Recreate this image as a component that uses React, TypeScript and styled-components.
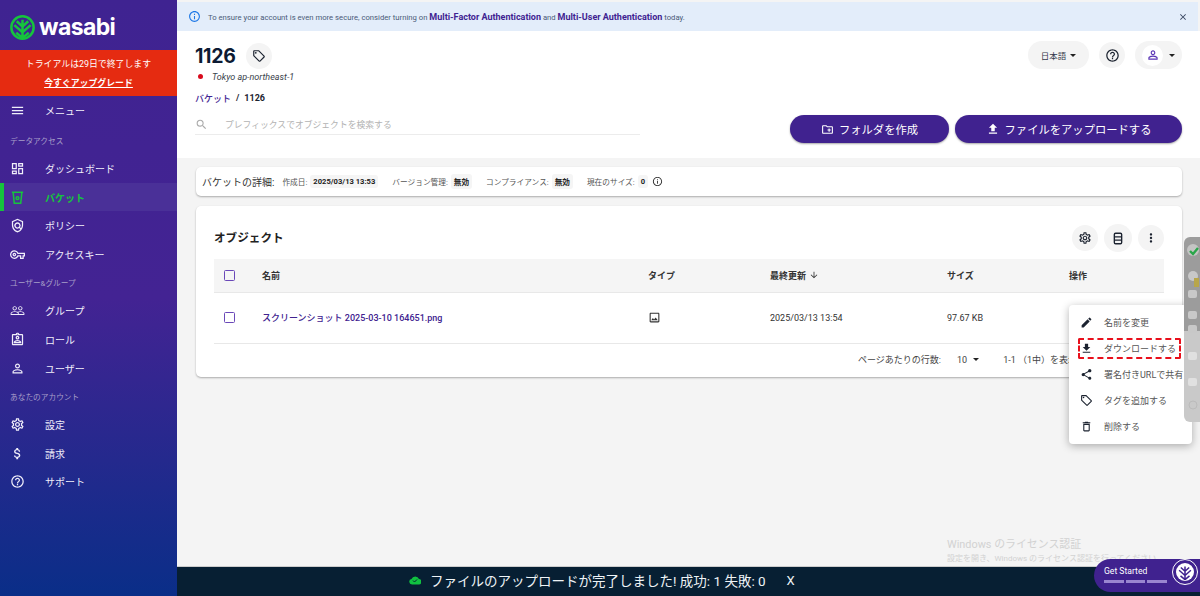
import React from "react";
import styled, { createGlobalStyle } from "styled-components";
import {
  MdMenu, MdOutlineDashboard, MdOutlineVpnKey, MdPeopleOutline, MdOutlineAssignmentInd, MdPersonOutline,
  MdOutlineSettings, MdAttachMoney, MdHelpOutline, MdSearch, MdInfoOutline, MdClose, MdOutlineLocalOffer,
  MdOutlineCreateNewFolder, MdFileUpload, MdMoreVert, MdArrowDownward, MdOutlineImage, MdEdit, MdFileDownload,
  MdShare, MdOutlineDelete, MdOutlinePolicy,
} from "react-icons/md";

const Global = createGlobalStyle`
  html, body { margin: 0; padding: 0; width: 1200px; height: 596px; overflow: hidden; background: #f4f4f4; }
  body { font-family: "Roboto", "Noto Sans CJK JP", sans-serif; color: #1c2330; }
  * { box-sizing: border-box; }
`;

const Page = styled.div`display: flex; width: 1200px; height: 596px; overflow: hidden; position: relative;`;
const Sidebar = styled.aside`
  width: 177px; flex: none; height: 596px; display: flex; flex-direction: column;
  background: linear-gradient(180deg, #3f2391 0%, #432393 50%, #0a2e88 100%);
  color: #fff;
`;
const Logo = styled.div`height: 50px; display: flex; align-items: center; gap: 4px; padding: 4px 0 0 10px; flex: none;`;
const LogoText = styled.span`font: 700 23px "Inter", "Liberation Sans", sans-serif; letter-spacing: -0.6px; color: #fff;`;
const Trial = styled.div`
  height: 46px; background: #e52b11; display: flex; flex-direction: column; align-items: center; flex: none;
  padding-top: 7px; gap: 5px; font-size: 8.9px; line-height: 14px;
`;
const Upgrade = styled.span`font-weight: 700; text-decoration: underline;`;
const Nav = styled.div`display: flex; flex-direction: column;`;
const NavItem = styled.div<{ $active?: boolean }>`
  height: 28.6px; flex: none; display: flex; align-items: center; padding-left: ${(p) => (p.$active ? "6px" : "10px")};
  gap: 20px; font-size: 10px; color: ${(p) => (p.$active ? "#16c43d" : "#f0eefa")};
  font-weight: ${(p) => (p.$active ? 700 : 400)};
  background: ${(p) => (p.$active ? "#4a3098" : "transparent")};
  border-left: ${(p) => (p.$active ? "4px solid #16c43d" : "none")};
  svg { width: 15px; height: 15px; flex: none; }
`;
const NavGroup = styled.div<{ $lead?: boolean }>`
  height: 28px; flex: none; display: flex; align-items: center; padding-left: 10px; font-size: 7.7px; color: #a79fc9;
  margin-top: ${(p) => (p.$lead ? "1.7px" : "0")};
`;

const Main = styled.main`flex: 1; min-width: 0; display: flex; flex-direction: column; position: relative;`;
const Notice = styled.div`
  height: 29px; flex: none; margin-top: 2px; margin-right: 2px; background: #e3edfa; display: flex; align-items: center;
  padding: 0 10px 0 11px; gap: 7px; font-size: 7.7px; color: #4a5a78;
`;
const NoticeText = styled.div`flex: 1;`;
const NoticeLink = styled.b`color: #3f2391; font-weight: 700; font-size: 9px;`;
const Head = styled.header`
  height: 127px; flex: none; background: #fff; padding: 11px 18px 0 18px; display: grid;
  grid-template-columns: 1fr auto;
`;
const HeadLeft = styled.div`display: flex; flex-direction: column; width: 445px;`;
const TitleRow = styled.div`display: flex; align-items: center; gap: 10px; height: 28px;`;
const Title = styled.h1`margin: 0; font: 700 19.5px "Inter", sans-serif; color: #0c1a33; letter-spacing: -0.3px;`;
const RoundBtn = styled.div<{ $size?: number }>`
  width: ${(p) => p.$size ?? 26}px; height: ${(p) => p.$size ?? 26}px; border-radius: 50%; background: #f4f4f4;
  display: flex; align-items: center; justify-content: center; flex: none; color: #1c2330;
`;
const Region = styled.div`display: flex; align-items: center; gap: 6px; height: 13px; font-size: 9px; font-style: italic; color: #3a3f4b;`;
const FlagDot = styled.span`width: 11px; height: 8px; background: #fff; display: flex; align-items: center; justify-content: center; &::after { content: ""; width: 5px; height: 5px; border-radius: 50%; background: #d80b1d; }`;
const Crumbs = styled.div`display: flex; align-items: center; gap: 5px; margin-top: 8px; font-size: 9px; font-weight: 700; color: #1c2330; height: 14px;`;
const CrumbLink = styled.span`color: #3f2391; font-weight: 500; font-size: 9px;`;
const SearchBox = styled.div`display: flex; align-items: center; gap: 17px; height: 22px; margin-top: 8px; padding-top: 1px; border-bottom: 1px solid #ececec; font-size: 8.8px; color: #b3b3b3;`;
const HeadRight = styled.div`display: flex; flex-direction: column; align-items: flex-end; margin-top: -1px;`;
const TopTools = styled.div`display: flex; align-items: center; gap: 10px;`;
const LangBtn = styled.div`width: 61px; height: 28px; border-radius: 14px; background: #f4f4f4; display: flex; align-items: center; justify-content: center; gap: 4px; font-size: 8.5px; color: #33394a;`;
const Caret = styled.span`width: 0; height: 0; border: 3px solid transparent; border-top: 3.5px solid #222; border-bottom: 0; display: inline-block;`;
const UserBtn = styled.div`width: 47px; height: 28px; border-radius: 14px; background: #f4f4f4; display: flex; align-items: center; gap: 6px; padding-left: 7px;`;
const UserCircle = styled.div`width: 21px; height: 21px; border-radius: 50%; background: #fff; display: flex; align-items: center; justify-content: center; color: #5a35b5;`;
const Actions = styled.div`display: flex; gap: 6px; margin-top: 46px;`;
const PrimaryBtn = styled.div<{ $w: number }>`
  width: ${(p) => p.$w}px; height: 28px; border-radius: 14px; background: #40228f; color: #fff;
  display: flex; align-items: center; justify-content: center; gap: 5px; font-size: 11.3px; box-shadow: 0 1px 2px rgba(0,0,0,.35);
`;
const Content = styled.div`flex: 1; padding: 9px 18px 0 19px; display: flex; flex-direction: column; gap: 10px; min-height: 0;`;
const Details = styled.div`height: 29px; background: #fff; border-radius: 5px; box-shadow: 0 1px 2px rgba(0,0,0,.3); display: flex; align-items: center; padding: 0 6px; font-size: 7.7px; color: #555;`;
const DetailsTitle = styled.span`font-size: 10px; color: #333; margin-right: 8px;`;
const DetailLabel = styled.span`margin-right: 3px;`;
const Chip = styled.b<{ $last?: boolean }>`background: #f5f5f5; border-radius: 3px; padding: 2px 3px; font-size: 7.6px; color: #222; margin-right: ${(p) => (p.$last ? "4px" : "14px")};`;
const Card = styled.section`height: 171px; background: #fff; border-radius: 5px; box-shadow: 0 1px 2px rgba(0,0,0,.3); padding: 17px 18px 0 18px;`;
const CardHead = styled.div`display: flex; align-items: center; justify-content: space-between; height: 26px; margin-top: 2px; margin-bottom: 8px;`;
const CardTitle = styled.h2`margin: 0 0 2px; font-size: 11.6px; font-weight: 700; color: #222;`;
const CardTools = styled.div`display: flex; gap: 6px; align-items: center;`;
const Row = styled.div<{ $head?: boolean }>`
  display: grid; grid-template-columns: 48px 386px 122px 177px 122px 1fr; align-items: center;
  height: ${(p) => (p.$head ? "34px" : "51px")};
  padding-bottom: 1px;
  background: ${(p) => (p.$head ? "#f5f5f5" : "#fff")};
  border-bottom: 1px solid #e8e8e8;
  font-size: 9px; color: #333;
  font-weight: ${(p) => (p.$head ? 700 : 400)};
`;
const Check = styled.span`width: 11px; height: 11px; margin-left: 10px; border: 1.5px solid #6a48b8; border-radius: 1.5px; display: block;`;
const FileLink = styled.span`font-weight: 500; color: #40228f; font-size: 9px;`;
const SortCell = styled.span`display: flex; align-items: center; gap: 3px;`;
const Pager = styled.div`height: 31px; display: flex; align-items: center; padding-left: 644px; font-size: 9px; color: #444; white-space: nowrap;`;
const PagerCount = styled.span`margin: 0 8px 0 16px; display: inline-flex; align-items: center; gap: 6px;`;
const PagerRange = styled.span`margin-left: 16px;`;

const Toast = styled.div`
  position: absolute; left: 0; right: 0; bottom: 0; height: 30px; background: #071f33; color: #eef3f6;
  border-top: 1px solid #ccc;
  display: flex; align-items: center; padding: 0 0 3px 232px; gap: 9px; font-size: 13.5px;
`;
const ToastClose = styled.span`font-size: 13px; margin-left: 12px;`;
const Watermark = styled.div`position: absolute; left: 770px; top: 537px; color: #d2d2d2; font-size: 10.9px; line-height: 15px;`;
const WatermarkSub = styled.div`font-size: 8px; line-height: 11px; margin-top: 1px;`;
const GetStarted = styled.div`
  position: absolute; left: 917px; top: 559px; width: 106px; height: 33px; border-radius: 17px 0 0 17px; background: #40228f;
  color: #fff; font-size: 8.6px; padding: 7px 0 0 10px; z-index: 3;
`;
const Progress = styled.div`display: flex; gap: 2px; margin-top: 4px; width: 63px; & > i { flex: 1; height: 2.5px; background: #9a86d0; display: block; }`;
const StartLogo = styled.div`position: absolute; right: 2px; top: 0; width: 26px; height: 26px; border-radius: 50%; background: #40228f; border: 1.5px solid #fff; display: flex; align-items: center; justify-content: center;`;

const Ext = styled.div`
  position: absolute; left: 1007px; top: 237px; width: 16px; height: 185px; z-index: 4; overflow: hidden;
  background: linear-gradient(180deg, #9c9c9c 0, #9c9c9c 94px, #c9c9c9 94px, #c9c9c9 100%); border-radius: 6px 0 0 6px;
`;
const PopMenu = styled.div`
  position: absolute; left: 892px; top: 305px; width: 123px; height: 139px; background: #fff; border-radius: 4px;
  box-shadow: 0 2px 8px rgba(0,0,0,.3); padding: 4px 6px 0 11px; z-index: 2; display: flex; flex-direction: column;
`;
const PopItem = styled.div<{ $marked?: boolean }>`
  position: relative; height: 26px; flex: none; display: flex; align-items: center; gap: 11px; font-size: 9px; color: #555; white-space: nowrap;
  svg { width: 13px; height: 13px; flex: none; color: #1c2330; }
  ${(p) => p.$marked && `
    &::before { content: ""; position: absolute; left: -2px; right: 5px; top: 3px; bottom: 2px; border: 2px dashed #e8101c; border-radius: 2px; }
  `}
`;

function WasabiMark({ size, stroke }: { size: number; stroke: string }) {
  return (
    <svg width={size} height={size} viewBox="0 0 26 26" fill="none" stroke={stroke} strokeWidth="2.6">
      <circle cx="13" cy="13" r="11.6" />
      <path d="M13 24V5M13 12 7 6.5M13 12l6-5.5M13 18 4.5 10.5M13 18l8.5-7.5M13 24 6.5 18.5M13 24l6.5-5.5" />
    </svg>
  );
}

function WasabiBadge() {
  return (
    <svg width="18" height="18" viewBox="0 0 26 26" fill="none" stroke="#40228f" strokeWidth="2.2">
      <circle cx="13" cy="13" r="13" fill="#fff" stroke="none" />
      <path d="M13 24V5M13 12 7 6.5M13 12l6-5.5M13 18 4.5 10.5M13 18l8.5-7.5M13 24 6.5 18.5M13 24l6.5-5.5" />
    </svg>
  );
}

function BucketIcon() {
  return (
    <svg viewBox="0 0 24 24" fill="none" stroke="currentColor" strokeWidth="2.4">
      <path d="M3 3.5h18M5 3.5 6.8 21h10.4L19 3.5" />
      <circle cx="12" cy="13" r="2.2" />
    </svg>
  );
}

function ViewColumnsIcon() {
  return (
    <svg width="12" height="13" viewBox="0 0 14 16" fill="none" stroke="#1c2330" strokeWidth="1.7">
      <rect x="2.5" y="1.5" width="9" height="13" rx="1.5" />
      <path d="M2.5 6h9M2.5 10h9" />
    </svg>
  );
}

function ExtIcons() {
  return (
    <svg width="16" height="185" viewBox="0 0 16 185">
      <circle cx="9" cy="13" r="6" fill="#c4c4c4" />
      <path d="M6 14l3 3 5-6" stroke="#2aa64a" strokeWidth="2.4" fill="none" />
      <circle cx="9" cy="39" r="5" fill="#c8c8c8" />
      <rect x="10" y="41" width="5" height="9" fill="#b8a64a" />
      <rect x="4" y="53" width="9" height="8" rx="2" fill="#c8c8c8" />
      <rect x="4" y="74" width="9" height="8" rx="2" fill="#c8c8c8" />
      <rect x="4" y="88" width="9" height="8" rx="2" fill="#c8c8c8" />
      <rect x="4" y="115" width="9" height="8" rx="2" fill="#e0e0e0" />
      <rect x="4" y="141" width="9" height="8" rx="2" fill="#e0e0e0" />
      <circle cx="9" cy="168" r="4" fill="none" stroke="#bbb" />
    </svg>
  );
}

export default function App() {
  return (
    <Page>
      <Global />
      <Sidebar>
        <Logo><WasabiMark size={25} stroke="#16c43d" /><LogoText>wasabi</LogoText></Logo>
        <Trial><span>トライアルは29日で終了します</span><Upgrade>今すぐアップグレード</Upgrade></Trial>
        <Nav>
          <NavItem><MdMenu /><span>メニュー</span></NavItem>
          <NavGroup $lead>データアクセス</NavGroup>
          <NavItem><MdOutlineDashboard /><span>ダッシュボード</span></NavItem>
          <NavItem $active><BucketIcon /><span>バケット</span></NavItem>
          <NavItem><MdOutlinePolicy /><span>ポリシー</span></NavItem>
          <NavItem><MdOutlineVpnKey /><span>アクセスキー</span></NavItem>
          <NavGroup>ユーザー&グループ</NavGroup>
          <NavItem><MdPeopleOutline /><span>グループ</span></NavItem>
          <NavItem><MdOutlineAssignmentInd /><span>ロール</span></NavItem>
          <NavItem><MdPersonOutline /><span>ユーザー</span></NavItem>
          <NavGroup>あなたのアカウント</NavGroup>
          <NavItem><MdOutlineSettings /><span>設定</span></NavItem>
          <NavItem><MdAttachMoney /><span>請求</span></NavItem>
          <NavItem><MdHelpOutline /><span>サポート</span></NavItem>
        </Nav>
      </Sidebar>
      <Main>
        <Notice>
          <MdInfoOutline size={13} color="#1e78e6" />
          <NoticeText>To ensure your account is even more secure, consider turning on <NoticeLink>Multi-Factor Authentication</NoticeLink> and <NoticeLink>Multi-User Authentication</NoticeLink> today.</NoticeText>
          <MdClose size={10} color="#33415c" />
        </Notice>
        <Head>
          <HeadLeft>
            <TitleRow><Title>1126</Title><RoundBtn><MdOutlineLocalOffer size={14} /></RoundBtn></TitleRow>
            <Region><FlagDot /><span>Tokyo ap-northeast-1</span></Region>
            <Crumbs><CrumbLink>バケット</CrumbLink><span>/</span><span>1126</span></Crumbs>
            <SearchBox><MdSearch size={13} color="#aaa" /><span>プレフィックスでオブジェクトを検索する</span></SearchBox>
          </HeadLeft>
          <HeadRight>
            <TopTools>
              <LangBtn>日本語<Caret /></LangBtn>
              <RoundBtn><MdHelpOutline size={15} /></RoundBtn>
              <UserBtn><UserCircle><MdPersonOutline size={14} /></UserCircle><Caret /></UserBtn>
            </TopTools>
            <Actions>
              <PrimaryBtn $w={159}><MdOutlineCreateNewFolder size={13} />フォルダを作成</PrimaryBtn>
              <PrimaryBtn $w={227}><MdFileUpload size={14} />ファイルをアップロードする</PrimaryBtn>
            </Actions>
          </HeadRight>
        </Head>
        <Content>
          <Details>
            <DetailsTitle>バケットの詳細:</DetailsTitle>
            <DetailLabel>作成日:</DetailLabel><Chip>2025/03/13 13:53</Chip>
            <DetailLabel>バージョン管理:</DetailLabel><Chip>無効</Chip>
            <DetailLabel>コンプライアンス:</DetailLabel><Chip>無効</Chip>
            <DetailLabel>現在のサイズ:</DetailLabel><Chip $last>0</Chip>
            <MdInfoOutline size={11} color="#333" />
          </Details>
          <Card>
            <CardHead>
              <CardTitle>オブジェクト</CardTitle>
              <CardTools>
                <RoundBtn><MdOutlineSettings size={14} /></RoundBtn>
                <RoundBtn $size={28}><ViewColumnsIcon /></RoundBtn>
                <RoundBtn><MdMoreVert size={14} /></RoundBtn>
              </CardTools>
            </CardHead>
            <Row $head>
              <Check /><span>名前</span><span>タイプ</span>
              <SortCell>最終更新 <MdArrowDownward size={10} /></SortCell>
              <span>サイズ</span><span>操作</span>
            </Row>
            <Row>
              <Check /><FileLink>スクリーンショット 2025-03-10 164651.png</FileLink>
              <MdOutlineImage size={13} />
              <span>2025/03/13 13:54</span><span>97.67 KB</span><span />
            </Row>
            <Pager>
              <span>ページあたりの行数:</span>
              <PagerCount>10<Caret /></PagerCount>
              <PagerRange>1-1 （1中）を表示</PagerRange>
            </Pager>
          </Card>
        </Content>
        <Ext><ExtIcons /></Ext>
        <PopMenu>
          <PopItem><MdEdit />名前を変更</PopItem>
          <PopItem $marked><MdFileDownload />ダウンロードする</PopItem>
          <PopItem><MdShare />署名付きURLで共有</PopItem>
          <PopItem><MdOutlineLocalOffer />タグを追加する</PopItem>
          <PopItem><MdOutlineDelete />削除する</PopItem>
        </PopMenu>
        <Watermark>Windows のライセンス認証<WatermarkSub>設定を開き、Windows のライセンス認証を行ってください。</WatermarkSub></Watermark>
        <Toast>
          <svg width="12" height="10" viewBox="0 0 24 20"><path d="M6 19a5.5 5.5 0 0 1-1-10.9A8 8 0 0 1 20 8a5.5 5.5 0 0 1-1 11z" fill="#10c040" /><path d="m8 11 3 3 5-5" stroke="#071f33" strokeWidth="2" fill="none" /></svg>
          <span>ファイルのアップロードが完了しました! 成功: 1 失敗: 0</span>
          <ToastClose>X</ToastClose>
        </Toast>
        <GetStarted>
          Get Started
          <Progress><i /><i /><i /></Progress>
          <StartLogo><WasabiBadge /></StartLogo>
        </GetStarted>
      </Main>
    </Page>
  );
}
